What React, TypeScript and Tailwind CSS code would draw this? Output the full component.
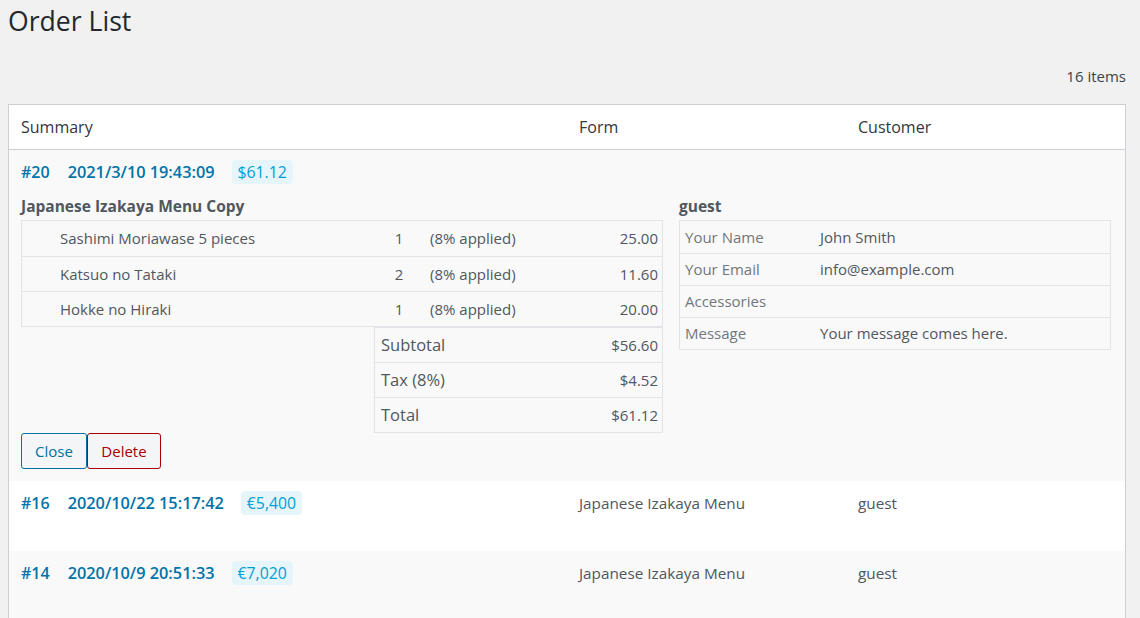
import React from "react";

type Item = { name: string; qty: number; price: string };

const items: Item[] = [
  { name: "Sashimi Moriawase 5 pieces", qty: 1, price: "25.00" },
  { name: "Katsuo no Tataki", qty: 2, price: "11.60" },
  { name: "Hokke no Hiraki", qty: 1, price: "20.00" },
];

const totals = [
  { label: "Subtotal", value: "$56.60" },
  { label: "Tax (8%)", value: "$4.52" },
  { label: "Total", value: "$61.12" },
];

const fields = [
  { label: "Your Name", value: "John Smith" },
  { label: "Your Email", value: "info@example.com" },
  { label: "Accessories", value: "" },
  { label: "Message", value: "Your message comes here." },
];

const OrderHead: React.FC<{ id: number; date: string; amount: string }> = ({ id, date, amount }) => (
  <div className="flex items-center h-[24px]">
    <a className="text-[16px] font-semibold text-[#0073aa] mr-[18px]">#{id}</a>
    <a className="text-[16.3px] font-semibold text-[#0073aa] mr-[17px]">{date}</a>
    <span className="rounded-[4px] bg-[#e5f5fa] px-[6px] text-[15.8px] leading-[24px] text-[#00a0d2]">{amount}</span>
  </div>
);

const OrderRow: React.FC<{ id: number; date: string; amount: string; striped?: boolean }> = ({
  id,
  date,
  amount,
  striped,
}) => (
  <div className={`grid grid-cols-[558px_279px_1fr] h-[70px] ${striped ? "bg-[#f9f9f9]" : "bg-white"}`}>
    <div className="px-3 pt-[10px]">
      <OrderHead id={id} date={date} amount={amount} />
    </div>
    <div className="px-3 pt-[10px] leading-[25px] text-[15.3px]">Japanese Izakaya Menu</div>
    <div className="px-3 pt-[10px] leading-[25px] text-[15.3px]">guest</div>
  </div>
);

export default function App() {
  return (
    <div className="min-h-screen bg-[#f1f1f1] pl-2 pr-[14px] font-['Open_Sans',sans-serif] text-[#50575e]">
      <h1 className="pt-[6px] text-[26.6px] leading-[30px] text-[#23282d]">Order List</h1>
      <div className="mt-[30px] mb-[18px] text-right text-[15px] leading-[20px] text-[#3c434a]">16 items</div>

      <div className="border border-[#ccd0d4] bg-white">
        <div className="grid grid-cols-[558px_279px_1fr] h-[45px] items-center border-b border-[#ccd0d4] text-[16px] text-[#32373c]">
          <div className="px-3">Summary</div>
          <div className="px-3">Form</div>
          <div className="px-3">Customer</div>
        </div>

        <div className="bg-[#f9f9f9] pl-3 pr-[14px] pt-[10px] pb-3">
          <OrderHead id={20} date="2021/3/10 19:43:09" amount="$61.12" />
          <div className="flex gap-4 mt-3">
            <div className="w-[642px]">
              <div className="text-[15.5px] font-bold leading-[20px] mb-1 text-[#50575e]">Japanese Izakaya Menu Copy</div>
              <div className="border border-[#e2e4e7] text-[15px]">
                {items.map((it, i) => (
                  <div
                    key={it.name}
                    className={`grid grid-cols-[354px_46px_1fr_auto] h-[35px] items-center ${i > 0 ? "border-t border-[#e2e4e7]" : ""}`}
                  >
                    <div className="pl-[38px]">{it.name}</div>
                    <div className="text-center">{it.qty}</div>
                    <div className="pl-[8px]">(8% applied)</div>
                    <div className="pr-[4px] text-right">{it.price}</div>
                  </div>
                ))}
              </div>
              <div className="ml-auto w-[289px] border border-[#e2e4e7]">
                {totals.map((t, i) => (
                  <div
                    key={t.label}
                    className={`flex items-center justify-between pl-[6px] pr-[4px] ${i > 0 ? "h-[35px] border-t border-[#e2e4e7]" : "h-[34px]"}`}
                  >
                    <span className="text-[16.5px]">{t.label}</span>
                    <span className="text-[15px]">{t.value}</span>
                  </div>
                ))}
              </div>
              <div className="flex">
                <button className="h-[36px] w-[66px] rounded-[3px] border border-[#0071a1] bg-[#f3f5f6] text-[15px] text-[#0071a1]">
                  Close
                </button>
                <button className="h-[36px] w-[74px] rounded-[3px] border border-[#aa0000] bg-[#f3f5f6] text-[15px] text-[#aa0000]">
                  Delete
                </button>
              </div>
            </div>

            <div className="w-[432px]">
              <div className="text-[15.5px] font-bold leading-[20px] mb-1 text-[#50575e]">guest</div>
              <div className="border border-[#e2e4e7] text-[15px]">
                {fields.map((f, i) => (
                  <div
                    key={f.label}
                    className={`grid grid-cols-[135px_1fr] h-[32px] items-center px-[5px] ${i > 0 ? "border-t border-[#e2e4e7]" : ""}`}
                  >
                    <span className="text-[#72777c]">{f.label}</span>
                    <span>{f.value}</span>
                  </div>
                ))}
              </div>
            </div>
          </div>
        </div>

        <OrderRow id={16} date="2020/10/22 15:17:42" amount="€5,400" />
        <OrderRow id={14} date="2020/10/9 20:51:33" amount="€7,020" striped />
      </div>
    </div>
  );
}
